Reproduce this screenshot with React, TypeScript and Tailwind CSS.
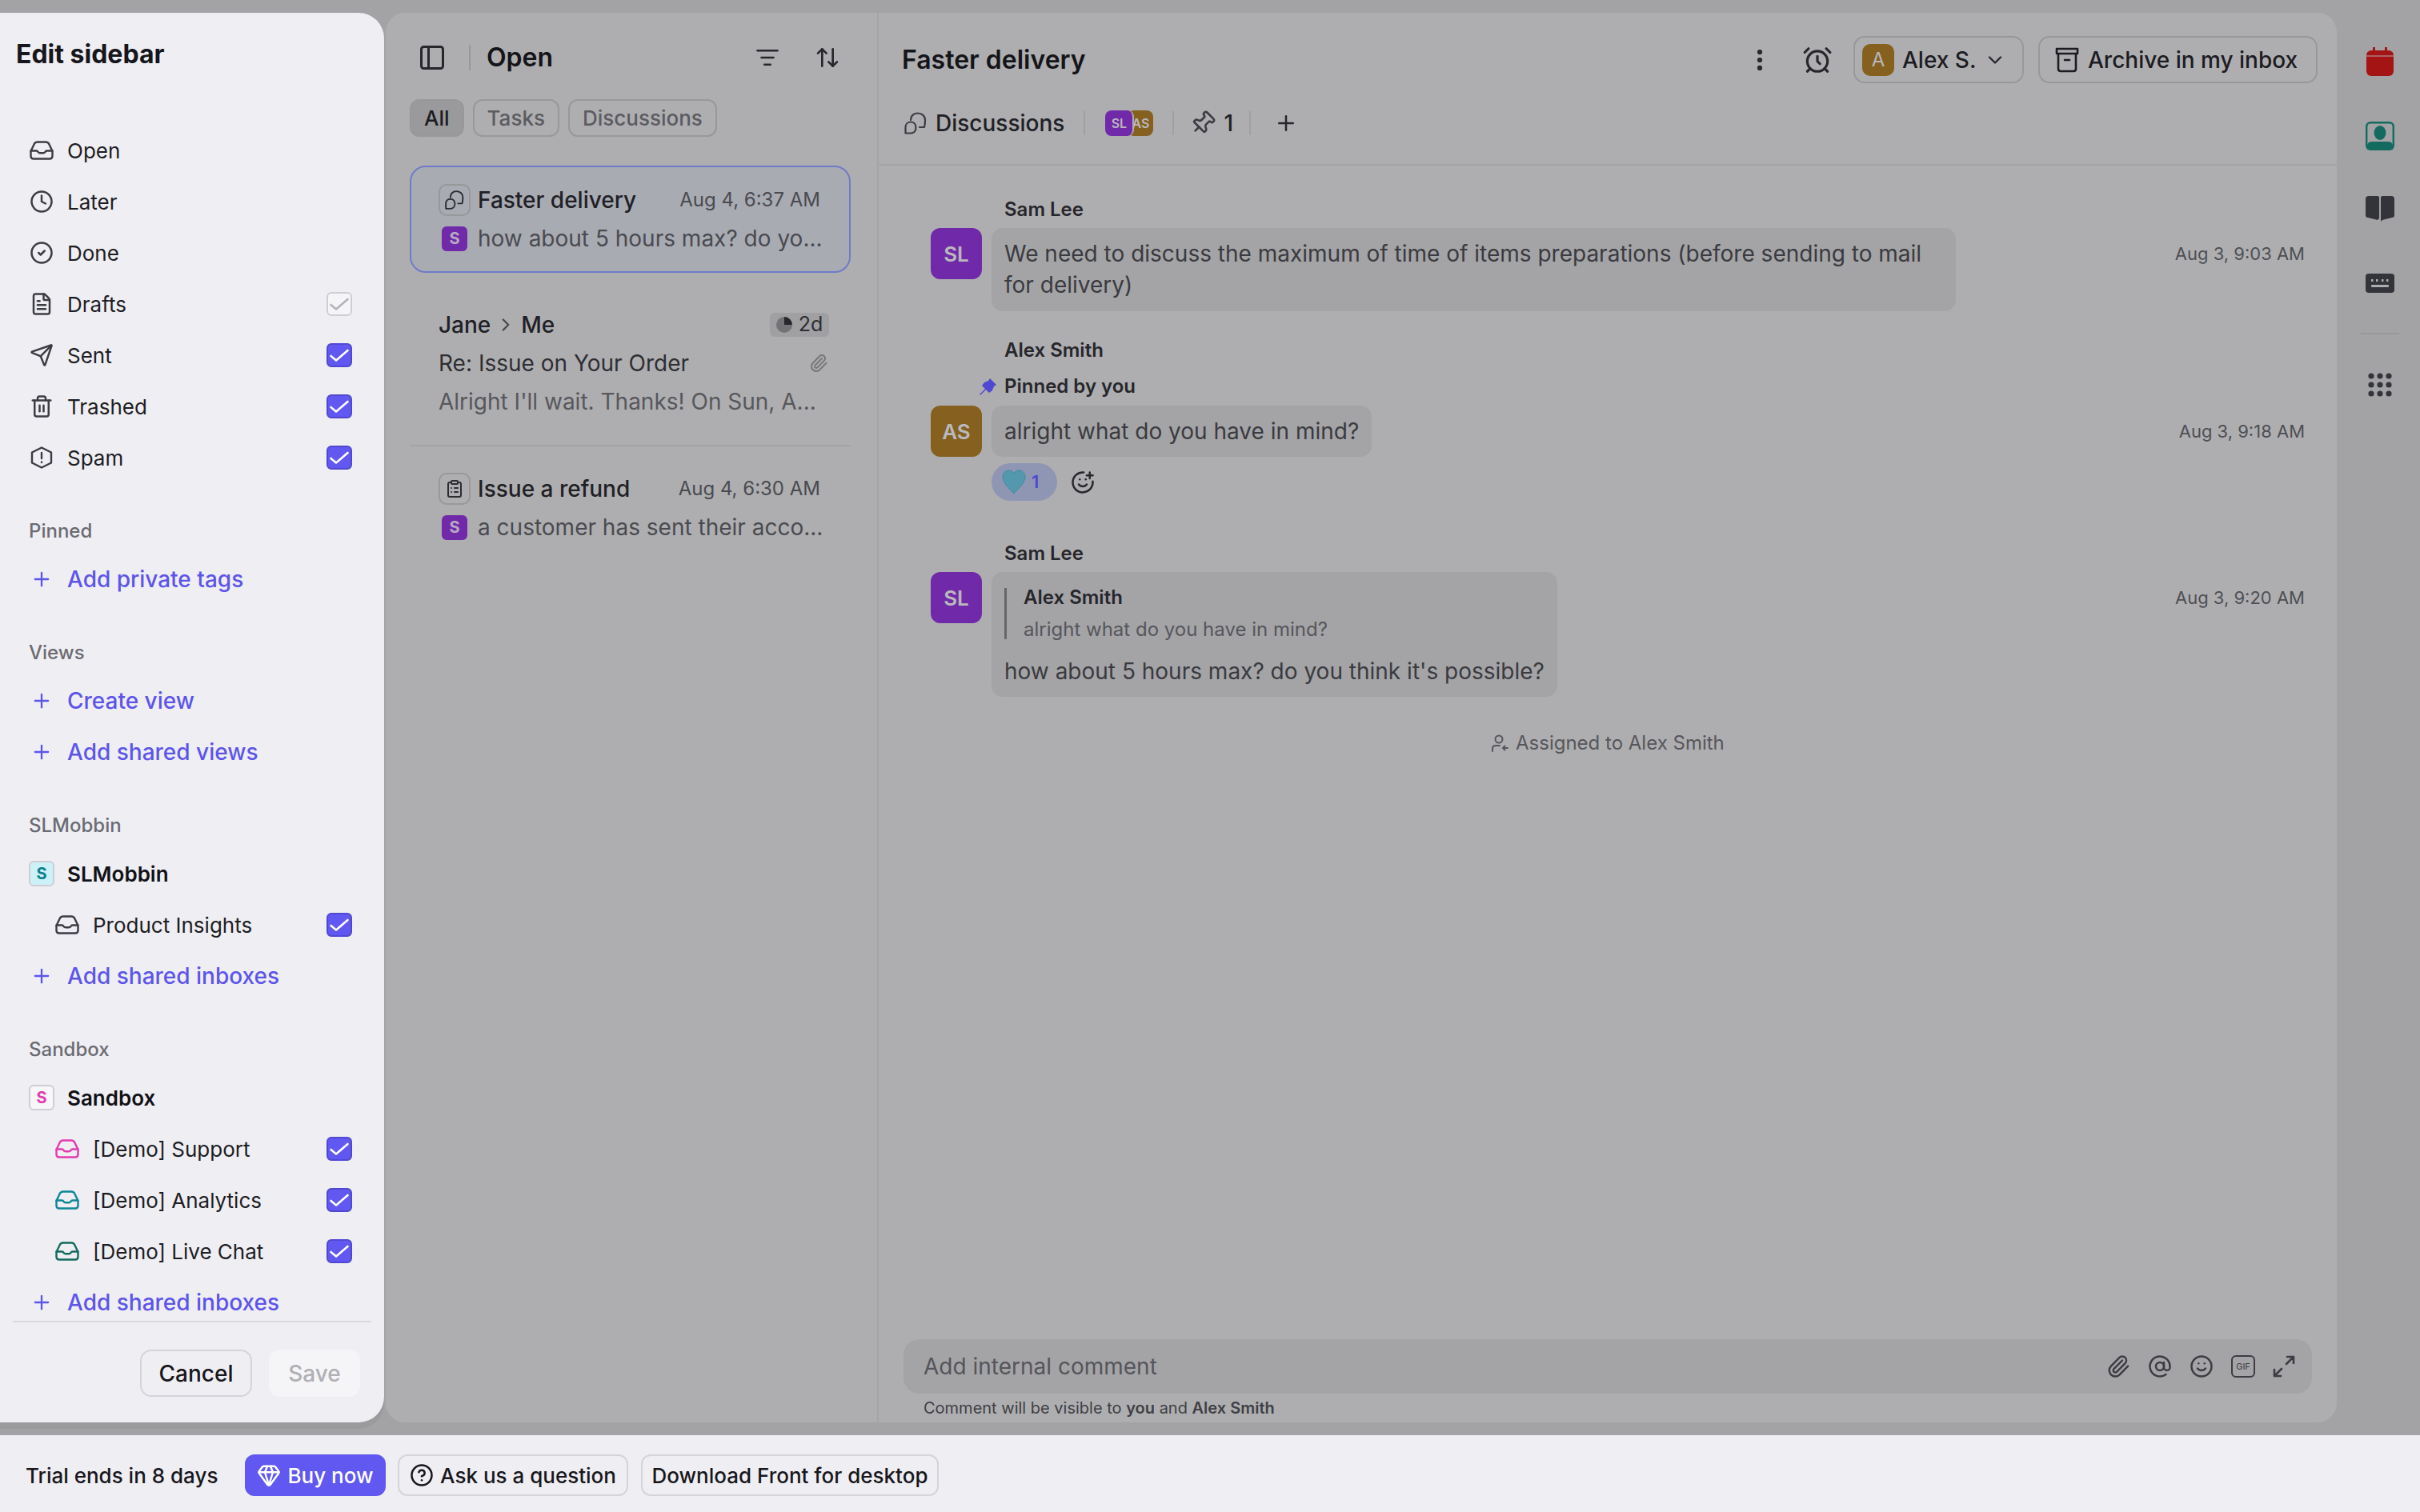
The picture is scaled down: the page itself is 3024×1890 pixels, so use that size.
import React from "react";
import {
  Clock, CircleCheck, FileText, Send, Trash2, Plus, PanelLeft, ListFilter, ArrowUpDown, EllipsisVertical,
  AlarmClock, ChevronDown, Pin, Paperclip, AtSign, Smile, SmilePlus, Gem, CircleHelp, ClipboardList, ChevronRight,
} from "lucide-react";

function Tray({ color = "#3c3c44" }: { color?: string }) {
  return (
    <svg width="30" height="24" viewBox="0 0 30 24" fill="none" stroke={color} strokeWidth="2.4" strokeLinejoin="round" strokeLinecap="round">
      <path d="M1.5 13 L5.5 4.5 Q6.8 1.5 9.8 1.5 H20.2 Q23.2 1.5 24.5 4.5 L28.5 13 V19 Q28.5 22.5 25 22.5 H5 Q1.5 22.5 1.5 19 Z" />
      <path d="M1.5 12.5 H8.5 Q9.8 12.5 10.4 13.8 Q11 15.2 12.8 15.2 H17.2 Q19 15.2 19.6 13.8 Q20.2 12.5 21.5 12.5 H28.5" />
    </svg>
  );
}

function Hexa() {
  return (
    <svg width="30" height="30" viewBox="0 0 30 30" fill="none" stroke="#3c3c44" strokeWidth="2.4" strokeLinejoin="round" strokeLinecap="round">
      <path d="M15 2.5 L27 8.5 V21.5 L15 27.5 L3 21.5 V8.5 Z" />
      <path d="M15 9 V16" />
      <path d="M15 20.5 V21" />
    </svg>
  );
}

function Check({ on = true }: { on?: boolean }) {
  return (
    <span className={on ? "ml-auto mr-[40px] flex h-[30px] w-[32px] items-center justify-center rounded-[6px] border-2 border-[#5049d0] bg-[#6058f0]" : "ml-auto mr-[40px] flex h-[30px] w-[32px] items-center justify-center rounded-[6px] border-2 border-[#cfced4] bg-[#f5f5f7]"}>
      <svg width="26" height="20" viewBox="0 0 26 20" fill="none" stroke={on ? "#ffffff" : "#b4b4b8"} strokeWidth="2.6" strokeLinecap="round" strokeLinejoin="round">
        <path d="M2.5 11 L9 16.5 L23.5 4" />
      </svg>
    </span>
  );
}

function Row({ icon, label, check }: { icon: React.ReactNode; label: string; check?: "on" | "off" }) {
  return (
    <div className="flex h-[64px] shrink-0 items-center">
      <span className="flex w-[84px] shrink-0 justify-center pl-[20px]">{icon}</span>
      <span className="text-[26px] text-[#1d1d24]">{label}</span>
      {check && <Check on={check === "on"} />}
    </div>
  );
}

function SubRow({ color, label }: { color?: string; label: string }) {
  return (
    <div className="flex h-[64px] shrink-0 items-center">
      <span className="flex w-[116px] shrink-0 justify-end pr-[17px]"><Tray color={color} /></span>
      <span className="text-[26px] text-[#1d1d24]">{label}</span>
      <Check />
    </div>
  );
}

function AddRow({ label }: { label: string }) {
  return (
    <div className="flex h-[64px] shrink-0 items-center">
      <span className="flex w-[84px] shrink-0 justify-center pl-[20px]"><Plus size={28} color="#5d55ea" strokeWidth={2} /></span>
      <span className="text-[28px] font-medium text-[#5d55ea]">{label}</span>
    </div>
  );
}

function Label({ text }: { text: string }) {
  return <div className="mt-[30px] flex h-[58px] shrink-0 items-center pl-[36px] pt-[2px] text-[24px] font-medium text-[#6b6b72]">{text}</div>;
}

function TeamRow({ label, letter, bg, color }: { label: string; letter: string; bg: string; color: string }) {
  return (
    <div className="flex h-[64px] shrink-0 items-center">
      <span className="ml-[36px] mr-[16px] flex h-[32px] w-[32px] items-center justify-center rounded-[6px] border-2 border-[#cfced4] text-[20px] font-bold" style={{ backgroundColor: bg, color }}>{letter}</span>
      <span className="text-[26px] font-semibold text-[#111116]">{label}</span>
    </div>
  );
}

function Sidebar() {
  const ic = { size: 30, color: "#3c3c44", strokeWidth: 2 };
  return (
    <aside className="relative z-10 flex h-full w-[480px] shrink-0 flex-col rounded-r-[32px] bg-[#efeef2] shadow-[0_8px_0_#9b9b9d]">
      <div className="h-[140px] shrink-0 pl-[20px] pt-[31px] text-[32px] font-bold leading-[42px] text-[#16161c]">Edit sidebar</div>
      <div className="flex flex-1 flex-col overflow-hidden">
        <Row icon={<Tray />} label="Open" />
        <Row icon={<Clock {...ic} />} label="Later" />
        <Row icon={<CircleCheck {...ic} />} label="Done" />
        <Row icon={<FileText {...ic} />} label="Drafts" check="off" />
        <Row icon={<Send {...ic} />} label="Sent" check="on" />
        <Row icon={<Trash2 {...ic} />} label="Trashed" check="on" />
        <Row icon={<Hexa />} label="Spam" check="on" />
        <Label text="Pinned" />
        <AddRow label="Add private tags" />
        <Label text="Views" />
        <AddRow label="Create view" />
        <AddRow label="Add shared views" />
        <Label text="SLMobbin" />
        <TeamRow label="SLMobbin" letter="S" bg="#cdf1f8" color="#0e7f90" />
        <SubRow label="Product Insights" />
        <AddRow label="Add shared inboxes" />
        <Label text="Sandbox" />
        <TeamRow label="Sandbox" letter="S" bg="#f7f6f9" color="#e23cb0" />
        <SubRow color="#e23cb0" label="[Demo] Support" />
        <SubRow color="#0e8696" label="[Demo] Analytics" />
        <SubRow color="#136b60" label="[Demo] Live Chat" />
        <AddRow label="Add shared inboxes" />
      </div>
      <div className="mx-[16px] flex h-[127px] shrink-0 items-start justify-end gap-[21px] border-t-2 border-[#d9d8dd] pr-[14px] pt-[34px]">
        <button className="h-[59px] w-[140px] rounded-[14px] border-2 border-[#d5d4da] text-[28px] font-medium text-[#17171d]">Cancel</button>
        <button className="h-[59px] w-[114px] rounded-[14px] bg-[#f5f5f8] text-[28px] font-medium text-[#b0b0b4]">Save</button>
      </div>
    </aside>
  );
}

function DiscussIcon({ size = 30, color = "#3c3c44" }: { size?: number; color?: string }) {
  return (
    <svg width={size} height={size} viewBox="0 0 30 30" fill="none" stroke={color} strokeWidth="2.2" strokeLinecap="round" strokeLinejoin="round">
      <path d="M9 11 C9 6 12.5 2.5 17.5 2.5 C23 2.5 27 6 27 11 C27 15 26.5 18 26 20 H20" />
      <path d="M9 13.5 C5 13.5 2.5 16.5 2.5 20 L2.5 27.5 H9 C13 27.5 15.5 24.5 15.5 20.5 C15.5 16.5 13 13.5 9 13.5 Z" />
    </svg>
  );
}

function SBadge() {
  return <span className="mx-[4px] flex h-[31px] w-[32px] shrink-0 items-center justify-center rounded-[6px] bg-[#7029a8] text-[20px] font-bold text-[#b7a9c6]">S</span>;
}

function TypeBox({ children }: { children: React.ReactNode }) {
  return <span className="flex h-[40px] w-[40px] shrink-0 items-center justify-center rounded-[10px] border-2 border-[#98989b]">{children}</span>;
}

function Chip({ text, active }: { text: string; active?: boolean }) {
  return <span className={active ? "flex h-[47px] items-center rounded-[12px] border-2 border-[#98989b] bg-[#9a9a9d] px-[16px] text-[26px] font-medium text-[#1c1c22]" : "flex h-[47px] items-center rounded-[12px] border-2 border-[#98989b] px-[16px] text-[26px] font-medium text-[#5b5b61]"}>{text}</span>;
}

function ListPanel() {
  return (
    <section className="flex h-full w-[616px] shrink-0 flex-col border-r-2 border-[#a5a5a8]">
      <div className="flex h-[108px] items-start pt-[4px]">
        <div className="flex h-[104px] w-full items-center pl-[40px] pr-[46px]">
          <PanelLeft size={36} color="#26262c" strokeWidth={2} />
          <span className="ml-[28px] h-[32px] w-[2px] bg-[#98989b]" />
          <span className="ml-[20px] text-[32px] font-semibold text-[#141419]">Open</span>
          <ListFilter size={30} color="#26262c" strokeWidth={2} className="ml-auto" />
          <ArrowUpDown size={32} color="#26262c" strokeWidth={2} className="ml-[44px]" />
        </div>
      </div>
      <div className="flex gap-[11px] pl-[30px]">
        <Chip text="All" active />
        <Chip text="Tasks" />
        <Chip text="Discussions" />
      </div>
      <div className="ml-[30px] mt-[36px] flex h-[134px] w-[551px] flex-col rounded-[20px] border-2 border-[#6f7bc8] bg-[#a9abb3] pl-[34px] pr-[36px] pt-[17px]">
        <div className="flex h-[48px] items-center">
          <TypeBox><DiscussIcon size={26} color="#2c2c32" /></TypeBox>
          <span className="ml-[9px] whitespace-nowrap text-[28px] font-medium text-[#202026]">Faster delivery</span>
          <span className="ml-auto whitespace-nowrap text-[24px] text-[#4a4a50]">Aug 4, 6:37 AM</span>
        </div>
        <div className="flex h-[48px] items-center">
          <SBadge />
          <span className="ml-[9px] whitespace-nowrap text-[28px] text-[#4a4a50]">how about 5 hours max? do yo...</span>
        </div>
      </div>
      <div className="ml-[66px] mr-[60px] mt-[41px] flex flex-col">
        <div className="flex h-[48px] items-center text-[28px] text-[#202026]">
          <span className="font-medium">Jane</span>
          <ChevronRight size={26} color="#45454b" strokeWidth={2} className="mx-[6px]" />
          <span className="font-medium">Me</span>
          <span className="ml-auto flex h-[30px] w-[74px] items-center justify-center gap-[8px] rounded-[6px] bg-[#a0a0a3] text-[25px] text-[#2e2e34]">
            <svg width="20" height="20" viewBox="0 0 20 20"><circle cx="10" cy="10" r="10" fill="#737377" /><path d="M10 10 V0 A10 10 0 0 1 20 10 Z" fill="#26262c" /></svg>
            2d
          </span>
        </div>
        <div className="flex h-[48px] items-center text-[28px] text-[#2e2e34]">
          <span>Re: Issue on Your Order</span>
          <Paperclip size={24} color="#77777b" strokeWidth={2} className="ml-auto mr-[1px]" />
        </div>
        <div className="flex h-[48px] items-center text-[28px] text-[#57575d]">Alright I'll wait. Thanks! On Sun, A...</div>
      </div>
      <div className="mx-[30px] mt-[30px] h-[2px] w-[551px] bg-[#a3a3a6]" />
      <div className="ml-[66px] mr-[71px] mt-[29px] flex flex-col">
        <div className="flex h-[48px] items-center">
          <TypeBox><ClipboardList size={24} color="#2c2c32" strokeWidth={2} /></TypeBox>
          <span className="ml-[9px] whitespace-nowrap text-[28px] font-medium text-[#202026]">Issue a refund</span>
          <span className="ml-auto whitespace-nowrap text-[24px] text-[#4a4a50]">Aug 4, 6:30 AM</span>
        </div>
        <div className="flex h-[48px] items-center">
          <SBadge />
          <span className="ml-[9px] whitespace-nowrap text-[28px] text-[#4a4a50]">a customer has sent their acco...</span>
        </div>
      </div>
    </section>
  );
}

function Avatar({ text, bg }: { text: string; bg: string }) {
  return <span className="flex h-[64px] w-[64px] shrink-0 items-center justify-center rounded-[12px] text-[26px] font-semibold text-[#b9b9bd]" style={{ backgroundColor: bg }}>{text}</span>;
}

function Name({ text, cls }: { text: string; cls: string }) {
  return <div className={"flex h-[32px] items-center pl-[157px] text-[24px] font-semibold text-[#26262c] " + cls}>{text}</div>;
}

function Time({ text }: { text: string }) {
  return <span className="ml-auto flex h-[64px] shrink-0 items-center pr-[40px] text-[22px] text-[#4e4e54]">{text}</span>;
}

function MainPanel() {
  return (
    <section className="flex h-full min-w-0 flex-1 flex-col">
      <header className="h-[191px] shrink-0 border-b-2 border-[#a5a5a8]">
        <div className="mt-[29px] flex h-[59px] items-center pl-[29px] pr-[24px]">
          <span className="text-[32px] font-semibold text-[#141419]">Faster delivery</span>
          <EllipsisVertical size={34} color="#26262c" strokeWidth={2.4} className="ml-auto" />
          <AlarmClock size={38} color="#26262c" strokeWidth={2} className="ml-[36px]" />
          <span className="ml-[26px] flex h-[59px] w-[213px] items-center rounded-[14px] border-2 border-[#98989b] pl-[9px]">
            <span className="flex h-[40px] w-[40px] items-center justify-center rounded-[10px] bg-[#85601f] text-[24px] text-[#b9b9bd]">A</span>
            <span className="ml-[10px] text-[28px] font-medium text-[#1c1c22]">Alex S.</span>
            <ChevronDown size={28} color="#26262c" strokeWidth={2} className="ml-[10px]" />
          </span>
          <span className="ml-[18px] flex h-[59px] w-[349px] items-center rounded-[14px] border-2 border-[#98989b] pl-[18px]">
            <svg width="32" height="34" viewBox="0 0 32 34" fill="none" stroke="#1c1c22" strokeWidth="2.6" strokeLinecap="round" strokeLinejoin="round">
              <path d="M3 3 H29 V9 H3 Z" />
              <path d="M5 9 V28 Q5 31 8 31 H24 Q27 31 27 28 V9" />
              <path d="M13 17 H19" />
            </svg>
            <span className="ml-[10px] text-[28px] font-medium text-[#1c1c22]">Archive in my inbox</span>
          </span>
        </div>
        <div className="mt-[25px] flex h-[50px] items-center pl-[31px]">
          <DiscussIcon size={30} color="#3c3c44" />
          <span className="ml-[10px] text-[28px] font-medium text-[#202026]">Discussions</span>
          <span className="ml-[24px] h-[30px] w-[2px] bg-[#a0a0a3]" />
          <span className="relative ml-[25px] flex h-[32px] w-[60px] items-center">
            <span className="absolute right-0 flex h-[32px] w-[32px] items-center justify-center rounded-[8px] bg-[#85601f] text-[16px] font-semibold text-[#b9b9bd]">AS</span>
            <span className="absolute left-0 flex h-[32px] w-[36px] items-center justify-center rounded-[8px] border-r-2 border-[#aeaeb0] bg-[#7029a8] text-[16px] font-semibold text-[#b9b9bd]">SL</span>
          </span>
          <span className="ml-[24px] h-[30px] w-[2px] bg-[#a0a0a3]" />
          <Pin size={32} color="#3c3c44" strokeWidth={2} className="ml-[20px] rotate-45" />
          <span className="ml-[10px] text-[28px] font-medium text-[#202026]">1</span>
          <span className="ml-[20px] h-[30px] w-[2px] bg-[#a0a0a3]" />
          <Plus size={30} color="#26262c" strokeWidth={2} className="ml-[29px]" />
        </div>
      </header>

      <div className="flex min-h-0 flex-1 flex-col">
        <Name text="Sam Lee" cls="mt-[39px]" />
        <div className="mt-[7px] flex items-start pl-[65px]">
          <Avatar text="SL" bg="#7029a8" />
          <div className="ml-[12px] w-[1205px] rounded-[14px] bg-[#a4a4a6] px-[16px] py-[13px] text-[28px] leading-[39px] text-[#3a3a40]">
            We need to discuss the maximum of time of items preparations (before sending to mail for delivery)
          </div>
          <Time text="Aug 3, 9:03 AM" />
        </div>

        <Name text="Alex Smith" cls="mt-[33px]" />
        <div className="relative mt-[13px] flex h-[32px] items-center pl-[157px] text-[24px] font-semibold text-[#26262c]">
          <svg className="absolute left-[125px] top-[4px]" width="24" height="24" viewBox="0 0 24 24" fill="#4f48d0"><path d="M14 2 L22 10 L19 12 L17 17 L13 20 L9 16 L2 23 L1 22 L8 15 L4 11 L7 7 L12 5 Z" /></svg>
          Pinned by you
        </div>
        <div className="mt-[8px] flex items-start pl-[65px]">
          <Avatar text="AS" bg="#85601f" />
          <div className="ml-[12px] flex h-[64px] items-center rounded-[14px] bg-[#a4a4a6] px-[16px] text-[28px] text-[#3a3a40]">alright what do you have in mind?</div>
          <Time text="Aug 3, 9:18 AM" />
        </div>
        <div className="ml-[141px] mt-[8px] flex h-[47px] items-center">
          <span className="flex h-[47px] w-[82px] items-center rounded-full bg-[#8f96b3] pl-[12px] text-[22px] font-semibold text-[#4f48d0]">
            <svg width="32" height="32" viewBox="0 0 32 32"><path d="M16 30 C10 23 2 17 2 9 C2 4 6 1 9 1 C12 1 15 2 16 5 C17 2 20 1 23 1 C26 1 30 4 30 9 C30 17 22 23 16 30 Z" fill="#5498ae" stroke="#3e8ca3" strokeWidth="1" /></svg>
            <span className="ml-[6px]">1</span>
          </span>
          <SmilePlus size={30} color="#26262c" strokeWidth={2} className="ml-[17px]" />
        </div>

        <Name text="Sam Lee" cls="mt-[50px]" />
        <div className="mt-[7px] flex items-start pl-[65px]">
          <Avatar text="SL" bg="#7029a8" />
          <div className="ml-[12px] flex h-[156px] w-[707px] flex-col rounded-[14px] bg-[#a4a4a6] px-[16px] pt-[20px]">
            <div className="flex h-[64px] flex-col border-l-[3px] border-[#66666b] pl-[21px]">
              <span className="flex h-[24px] items-center text-[24px] font-semibold text-[#26262c]">Alex Smith</span>
              <span className="mt-[16px] flex h-[24px] items-center text-[24px] text-[#56565c]">alright what do you have in mind?</span>
            </div>
            <div className="mt-[20px] flex h-[40px] items-center text-[28px] text-[#3a3a40]">how about 5 hours max? do you think it's possible?</div>
          </div>
          <Time text="Aug 3, 9:20 AM" />
        </div>

        <div className="mt-[42px] flex h-[32px] items-center pl-[764px] text-[24px] text-[#56565c]">
          <svg width="24" height="24" viewBox="0 0 24 24" fill="none" stroke="#56565c" strokeWidth="2" strokeLinecap="round">
            <circle cx="11" cy="7" r="4.5" />
            <path d="M3 22 V19 Q3 15 7 15 H12" />
            <path d="M22 18 H16 M18.5 15.5 L16 18 L18.5 20.5" />
          </svg>
          <span className="ml-[8px]">Assigned to Alex Smith</span>
        </div>

        <div className="mx-[31px] mt-auto flex h-[68px] shrink-0 items-center rounded-[20px] bg-[#a4a4a6] pl-[25px] pr-[20px]">
          <span className="text-[28px] text-[#55555b]">Add internal comment</span>
          <Paperclip size={30} color="#3c3c44" strokeWidth={2} className="ml-auto" />
          <AtSign size={30} color="#3c3c44" strokeWidth={2} className="ml-[22px]" />
          <Smile size={30} color="#3c3c44" strokeWidth={2} className="ml-[22px]" />
          <span className="ml-[22px] flex h-[28px] w-[30px] items-center justify-center rounded-[6px] border-[2.5px] border-[#3c3c44] text-[11px] text-[#3c3c44]">GIF</span>
          <svg className="ml-[21px]" width="30" height="30" viewBox="0 0 30 30" fill="none" stroke="#3c3c44" strokeWidth="2.6" strokeLinecap="round" strokeLinejoin="round">
            <path d="M18 12 L27 3 M19 3 H27 V11" />
            <path d="M12 18 L3 27 M3 19 V27 H11" />
          </svg>
        </div>
        <div className="flex h-[36px] shrink-0 items-center pl-[56px] text-[20px] text-[#3f3f45]">
          <span>Comment will be visible to <b className="font-semibold">you</b> and <b className="font-semibold">Alex Smith</b></span>
        </div>
      </div>
    </section>
  );
}

function Rail() {
  return (
    <nav className="flex h-full w-[104px] shrink-0 flex-col items-center pl-[4px]">
      <svg className="mt-[43px]" width="34" height="36" viewBox="0 0 34 36" fill="#a51414">
        <rect x="0" y="4" width="34" height="32" rx="6" />
        <rect x="8" y="0" width="3" height="8" />
        <rect x="23" y="0" width="3" height="8" />
        <rect x="0" y="10" width="34" height="2" fill="#aeaeb0" opacity="0.5" />
      </svg>
      <svg className="mt-[57px]" width="36" height="36" viewBox="0 0 36 36" fill="none">
        <rect x="1.2" y="1.2" width="33.6" height="33.6" rx="5" stroke="#136b60" strokeWidth="2.4" />
        <ellipse cx="18" cy="14" rx="7.5" ry="9" fill="#136b60" />
        <path d="M2 35 V30 Q2 25 9 25 H27 Q34 25 34 30 V35 Z" fill="#136b60" />
      </svg>
      <svg className="mt-[57px]" width="36" height="32" viewBox="0 0 36 32" fill="#33343a">
        <path d="M4 0 H15 Q17 0 17 2 V28 L15 30 L3 27 Q0 27 0 24 V4 Q0 0 4 0 Z" />
        <path d="M32 0 H21 Q19 0 19 2 V32 L21 30 L33 27 Q36 27 36 24 V4 Q36 0 32 0 Z" />
      </svg>
      <svg className="mt-[65px]" width="36" height="24" viewBox="0 0 36 24" fill="#33343a">
        <rect width="36" height="24" rx="4" />
        <g fill="#aeaeb0">
          <rect x="7" y="7" width="2.4" height="3" /><rect x="13" y="7" width="2.4" height="3" /><rect x="20" y="7" width="2.4" height="3" /><rect x="26" y="7" width="2.4" height="3" />
          <rect x="7" y="14" width="22" height="3" rx="1" />
        </g>
      </svg>
      <span className="mt-[50px] h-[2px] w-[48px] bg-[#98989b]" />
      <svg className="mt-[48px]" width="30" height="30" viewBox="0 0 30 30" fill="#33343a">
        {[4, 15, 26].flatMap((y) => [4, 15, 26].map((x) => <circle key={`${x}-${y}`} cx={x} cy={y} r="3.6" />))}
      </svg>
    </nav>
  );
}

function BottomBar() {
  return (
    <footer className="flex h-[96px] shrink-0 items-center whitespace-nowrap bg-[#efeef2] pl-[32px] pt-[4px]">
      <span className="w-[241px] text-[26px] font-medium text-[#17171d]">Trial ends in 8 days</span>
      <span className="ml-[33px] flex h-[52px] w-[176px] items-center justify-center gap-[8px] rounded-[12px] bg-[#6058f0] text-[26px] font-medium text-white">
        <Gem size={30} color="#ffffff" strokeWidth={2} />
        Buy now
      </span>
      <span className="ml-[15px] flex h-[52px] w-[288px] items-center justify-center gap-[8px] rounded-[12px] border-2 border-[#d5d4da] text-[26px] font-medium text-[#17171d]">
        <CircleHelp size={30} color="#17171d" strokeWidth={2} />
        Ask us a question
      </span>
      <span className="ml-[16px] flex h-[52px] w-[372px] items-center justify-center rounded-[12px] border-2 border-[#d5d4da] text-[26px] font-medium text-[#17171d]">Download Front for desktop</span>
    </footer>
  );
}

export default function App() {
  return (
    <div className="flex h-[1890px] w-[3024px] flex-col overflow-hidden bg-[#a3a3a5] [font-family:Inter,sans-serif]">
      <div className="flex min-h-0 flex-1 py-[16px]">
        <Sidebar />
        <div className="ml-[2px] flex h-full min-w-0 flex-1 rounded-[24px] bg-[#aeaeb0]">
          <ListPanel />
          <MainPanel />
        </div>
        <Rail />
      </div>
      <BottomBar />
    </div>
  );
}
